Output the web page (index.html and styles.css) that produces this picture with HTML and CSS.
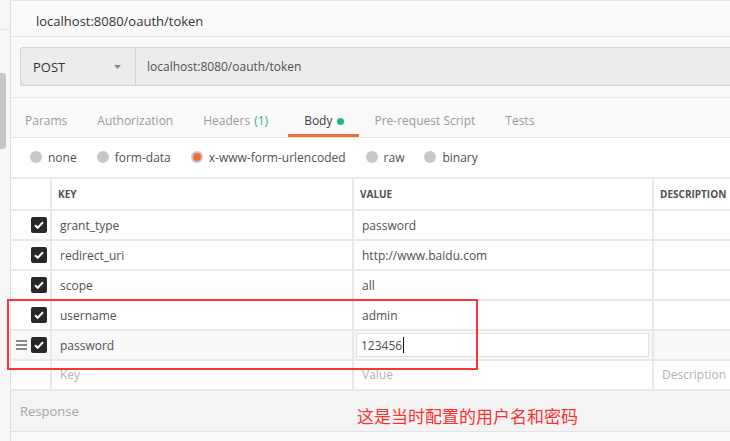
FILE: index.html
```html
<!DOCTYPE html>
<html>
<head>
<meta charset="utf-8">
<link rel="stylesheet" href="styles.css">
</head>
<body>
<div class="app">
  <aside class="side">
    <div class="side-top"></div>
    <div class="thumb"></div>
  </aside>
  <main class="main">
    <div class="title">localhost:8080/oauth/token</div>
    <div class="urlbar">
      <div class="method">
        <span>POST</span>
        <svg class="caret" width="7" height="4" viewBox="0 0 7 4"><path d="M0 0h7L3.5 4z" fill="#8a8a8a"/></svg>
      </div>
      <div class="url">localhost:8080/oauth/token</div>
    </div>
    <nav class="tabs">
      <div class="tab">Params</div>
      <div class="tab">Authorization</div>
      <div class="tab tab-headers">Headers <span class="count">(1)</span></div>
      <div class="tab active">Body <span class="dot"></span></div>
      <div class="tab">Pre-request Script</div>
      <div class="tab">Tests</div>
    </nav>
    <div class="radios">
      <label class="radio"><span class="circle"></span>none</label>
      <label class="radio"><span class="circle"></span>form-data</label>
      <label class="radio"><span class="circle on"></span>x-www-form-urlencoded</label>
      <label class="radio"><span class="circle"></span>raw</label>
      <label class="radio"><span class="circle"></span>binary</label>
    </div>
    <div class="table">
      <div class="cell chk"></div>
      <div class="cell head">KEY</div>
      <div class="cell head">VALUE</div>
      <div class="cell head">DESCRIPTION</div>

      <div class="cell chk"><span class="box"><svg width="10" height="8" viewBox="0 0 10 8"><path d="M1 4.2l2.7 2.6L9 1.3" fill="none" stroke="#fff" stroke-width="2"/></svg></span></div>
      <div class="cell">grant_type</div>
      <div class="cell">password</div>
      <div class="cell"></div>

      <div class="cell chk"><span class="box"><svg width="10" height="8" viewBox="0 0 10 8"><path d="M1 4.2l2.7 2.6L9 1.3" fill="none" stroke="#fff" stroke-width="2"/></svg></span></div>
      <div class="cell">redirect_uri</div>
      <div class="cell">http://www.baidu.com</div>
      <div class="cell"></div>

      <div class="cell chk"><span class="box"><svg width="10" height="8" viewBox="0 0 10 8"><path d="M1 4.2l2.7 2.6L9 1.3" fill="none" stroke="#fff" stroke-width="2"/></svg></span></div>
      <div class="cell">scope</div>
      <div class="cell">all</div>
      <div class="cell"></div>

      <div class="cell chk"><span class="box"><svg width="10" height="8" viewBox="0 0 10 8"><path d="M1 4.2l2.7 2.6L9 1.3" fill="none" stroke="#fff" stroke-width="2"/></svg></span></div>
      <div class="cell">username</div>
      <div class="cell">admin</div>
      <div class="cell"></div>

      <div class="cell chk hover"><span class="grip"><i></i><i></i><i></i></span><span class="box"><svg width="10" height="8" viewBox="0 0 10 8"><path d="M1 4.2l2.7 2.6L9 1.3" fill="none" stroke="#fff" stroke-width="2"/></svg></span></div>
      <div class="cell hover">password</div>
      <div class="cell hover edit"><div class="input">123456<span class="cursor"></span></div></div>
      <div class="cell hover"></div>

      <div class="cell chk"></div>
      <div class="cell ph">Key</div>
      <div class="cell ph">Value</div>
      <div class="cell ph">Description</div>
    </div>
    <div class="response">Response</div>
  </main>
  <div class="annot-box"></div>
  <div class="annot-text">这是当时配置的用户名和密码</div>
</div>
</body>
</html>
```

FILE: styles.css
```css
html, body {
  margin: 0;
  padding: 0;
  background: #fff;
}
body {
  font-family: "Open Sans", "Noto Sans", sans-serif;
  color: #505050;
  width: 730px;
  height: 441px;
  overflow: hidden;
}
.app {
  position: relative;
  display: flex;
  height: 441px;
}
.side {
  width: 10px;
  flex: none;
  background: #f7f7f7;
  border-right: 1px solid #dedede;
  display: flex;
  flex-direction: column;
}
.side-top {
  height: 29px;
  border-bottom: 1px solid #e3e3e3;
}
.thumb {
  margin-top: 43px;
  width: 6px;
  height: 76px;
  background: #c6c6c6;
  border-radius: 0 3px 3px 0;
}
.main {
  flex: 1;
  min-width: 0;
  background: #fafafa;
  border-top: 1px solid #e6e6e6;
  display: flex;
  flex-direction: column;
}
.title {
  height: 36px;
  padding-top: 5px;
  box-sizing: border-box;
  line-height: 30px;
  border-bottom: 1px solid #e6e6e6;
  padding-left: 25px;
  font-size: 13px;
  color: #333;
  flex: none;
}
.urlbar {
  margin: 10px 0 0 9px;
  height: 39px;
  box-sizing: border-box;
  display: flex;
  border: 1px solid #d2d2d2;
  border-right: none;
  border-radius: 3px 0 0 3px;
  background: #ececec;
  flex: none;
}
.method {
  width: 115px;
  flex: none;
  display: flex;
  align-items: center;
  justify-content: space-between;
  padding: 0 14px 0 12px;
  box-sizing: border-box;
  border-right: 1px solid #d2d2d2;
  font-size: 13px;
  color: #333;
}
.url {
  display: flex;
  align-items: center;
  padding-left: 11px;
  font-size: 12px;
  color: #505050;
}
.tabs {
  margin-top: 11px;
  border-top: 1px solid #e8e8e8;
  border-bottom: 1px solid #e4e4e4;
  display: flex;
  height: 41px;
  box-sizing: border-box;
  flex: none;
}
.tab {
  height: 39px;
  box-sizing: border-box;
  padding: 10px 15px 0;
  line-height: 26px;
  font-size: 12px;
  color: #9a9a9a;
  border-bottom: 3px solid transparent;
  display: flex;
  align-items: flex-start;
  gap: 4px;
}
.tab:first-child { padding-left: 14px; }
.tab-headers { padding-right: 20px; }
.count { color: #26b47f; }
.tab.active {
  color: #404040;
  border-bottom-color: #f26b3a;
  padding-left: 16px;
}
.dot {
  width: 7px;
  height: 7px;
  border-radius: 50%;
  background: #26b47f;
  margin-top: 10px;
  margin-left: 1px;
}
.radios {
  height: 39px;
  background: #fff;
  display: flex;
  align-items: center;
  gap: 20px;
  padding-left: 19px;
  flex: none;
}
.radio {
  display: flex;
  align-items: center;
  gap: 6px;
  font-size: 12px;
  color: #505050;
}
.circle {
  width: 12px;
  height: 12px;
  border-radius: 50%;
  background: #c8c8c8;
  box-sizing: border-box;
  margin-top: -2px;
}
.circle.on {
  background: #f26b3a;
  border: 2px solid #c8c8c8;
}
.table {
  display: grid;
  grid-template-columns: 39px 300px 298px 1fr;
  grid-auto-rows: 28px;
  grid-template-rows: 30px;
  gap: 2px;
  padding: 2px 0;
  background: #e9e9e9;
  flex: none;
}
.cell {
  background: #fff;
  display: flex;
  align-items: center;
  padding-left: 8px;
  font-size: 12px;
  color: #505050;
  white-space: nowrap;
  overflow: hidden;
}
.cell.head {
  padding-left: 6px;
  font-size: 10px;
  font-weight: 700;
  color: #505050;
}
.cell.chk {
  padding: 0 3px 0 0;
  justify-content: flex-end;
  gap: 4px;
}
.cell.hover { background: #f8f8f8; }
.cell.ph { color: #b3b3b3; align-items: flex-start; padding-top: 5px; }
.cell.edit { padding-left: 2px; padding-right: 3px; }
.box {
  width: 16px;
  height: 16px;
  border-radius: 2px;
  background: #282828;
  display: flex;
  align-items: center;
  justify-content: center;
}
.grip {
  width: 11px;
  display: flex;
  flex-direction: column;
  gap: 2px;
}
.grip i {
  display: block;
  height: 2px;
  background: #8a8a8a;
}
.input {
  flex: 1;
  height: 24px;
  box-sizing: border-box;
  border: 1px solid #e2e2e2;
  background: #fff;
  display: flex;
  align-items: center;
  padding-left: 4px;
  color: #505050;
}
.cursor {
  width: 1px;
  height: 16px;
  background: #111;
  margin-left: 1px;
}
.response {
  height: 40px;
  background: #f4f4f4;
  border-bottom: 1px solid #e4e4e4;
  padding-left: 9px;
  display: flex;
  align-items: center;
  font-size: 13px;
  color: #a5a5a5;
  flex: none;
}
.annot-box {
  position: absolute;
  left: 7px;
  top: 299px;
  width: 471px;
  height: 71px;
  box-sizing: border-box;
  border: 2px solid #ff3535;
}
.annot-text {
  position: absolute;
  left: 357px;
  top: 405px;
  line-height: 22px;
  font-size: 17px;
  color: #ff3030;
  font-family: "Noto Sans CJK SC", sans-serif;
}
```
